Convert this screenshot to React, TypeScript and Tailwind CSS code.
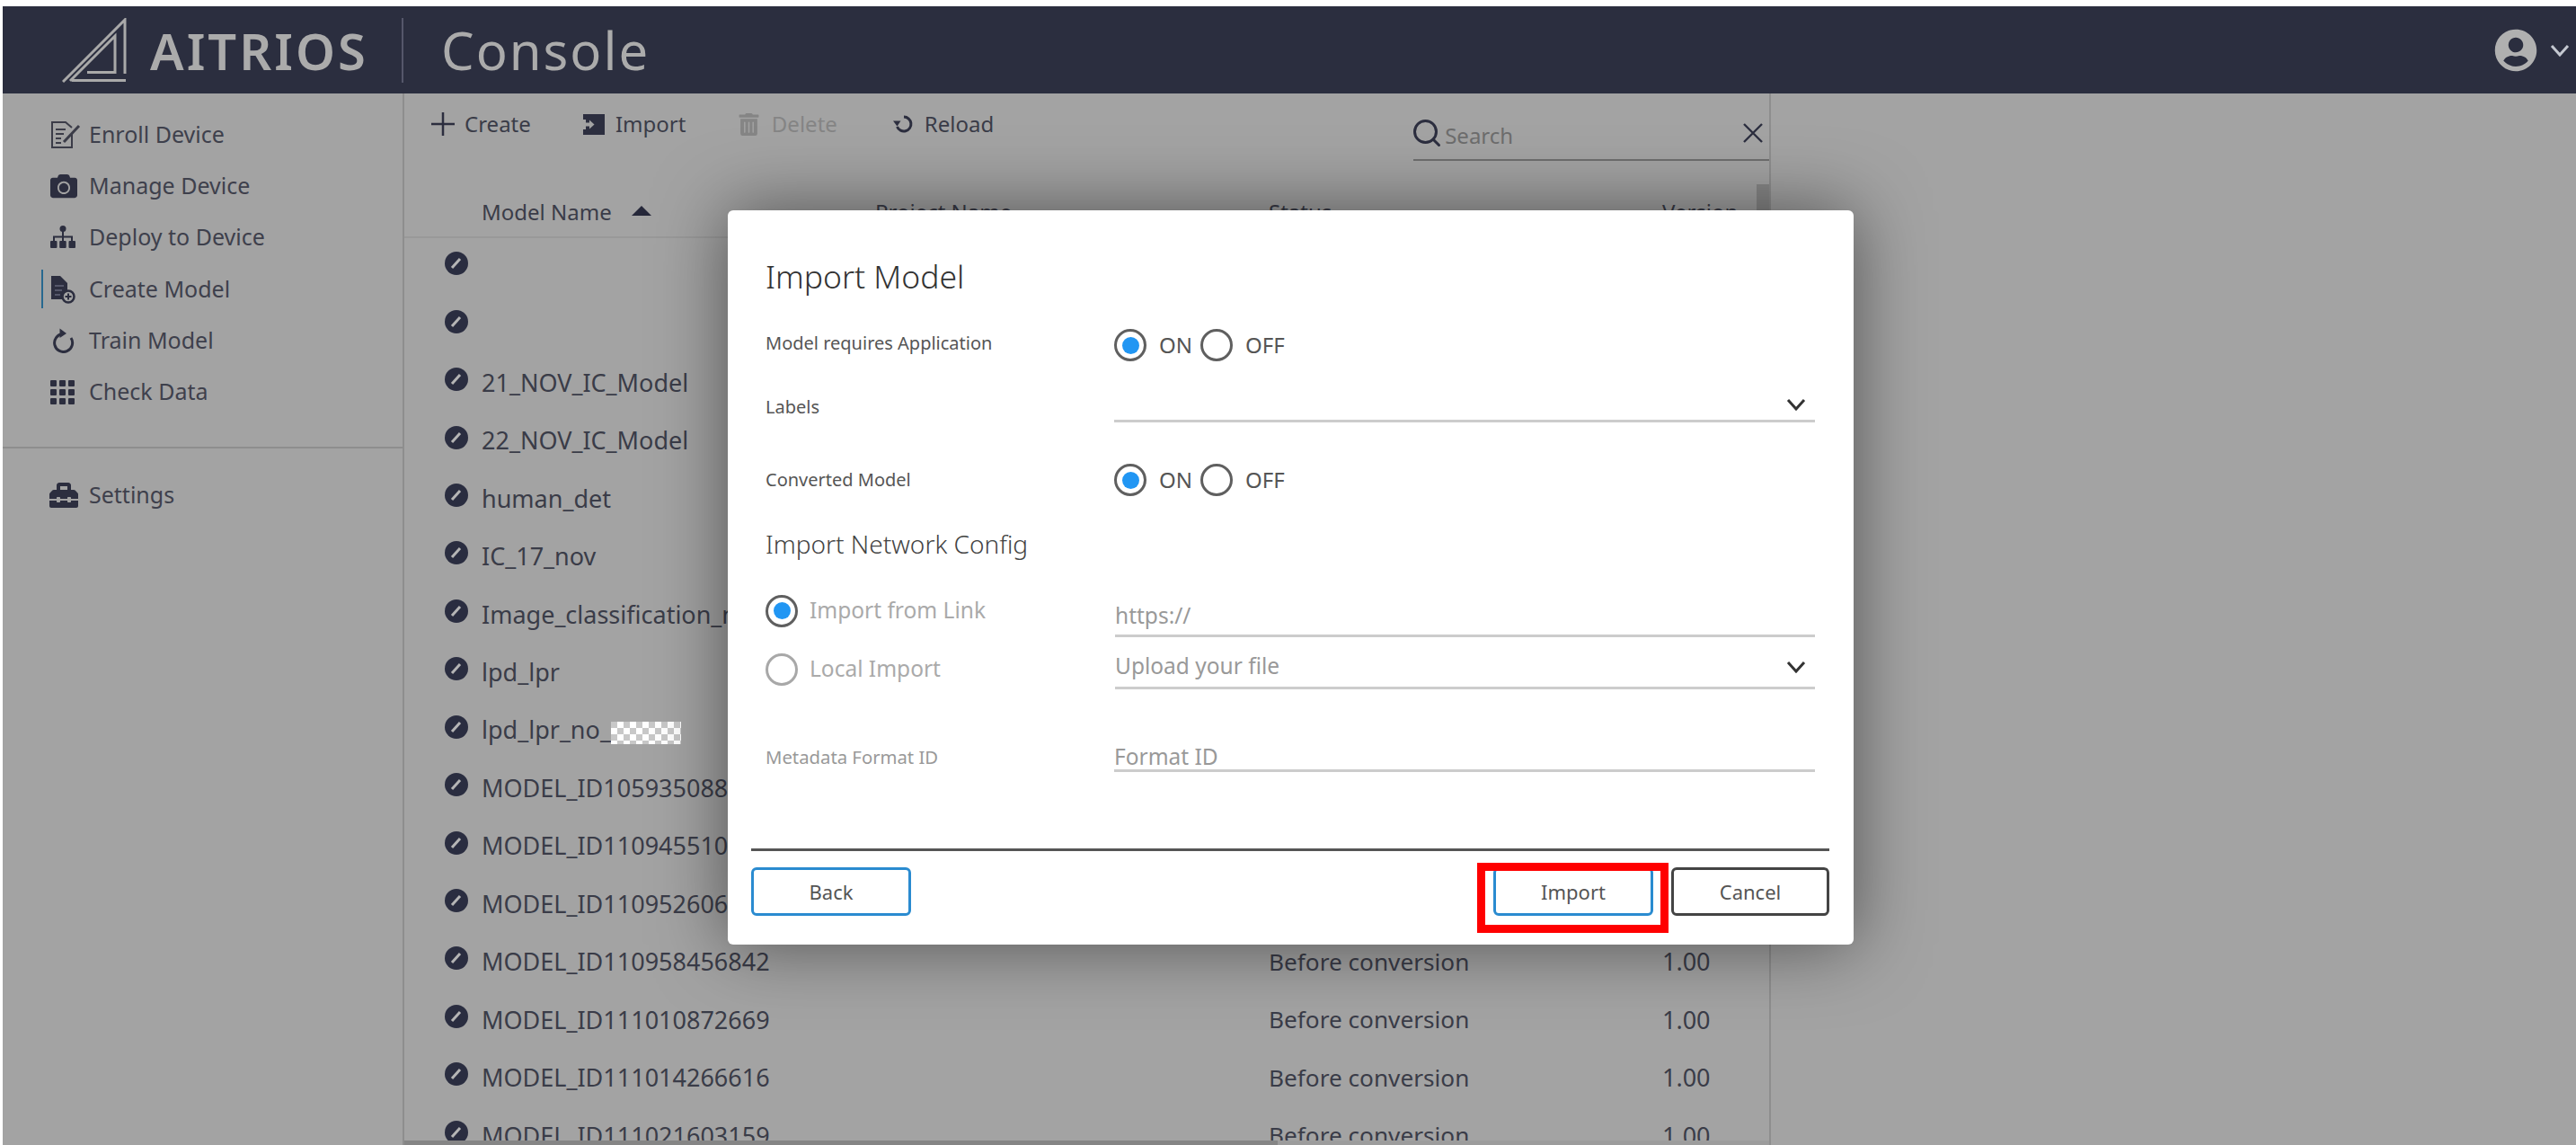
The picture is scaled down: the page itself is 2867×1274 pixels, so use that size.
import { Search } from "lucide-react";
import { FaCamera, FaToolbox, FaUserCircle, FaTrashAlt } from "react-icons/fa";

function Logo() {
  return (
    <svg width="72" height="72" viewBox="0 0 72 72" fill="none" stroke="#a9a9a9" strokeWidth="3" className="shrink-0">
      <path d="M1 71 L70 2 V62" />
      <path d="M11 69.5 H71" />
      <path d="M9 70 L59 20 V60.5 H28" />
    </svg>
  );
}

function Chev({ color = "#333" }: { color?: string }) {
  return (
    <svg width="22" height="14" viewBox="0 0 22 14" fill="none" stroke={color} strokeWidth="3" className="shrink-0">
      <path d="M2 2 L11 12 L20 2" />
    </svg>
  );
}

function EnrollIcon() {
  return (
    <svg width="34" height="32" viewBox="0 0 34 32" fill="none" stroke="#3b3c48" strokeWidth="2">
      <path d="M24 14 V30 H2 V2 H17 L24 8" />
      <path d="M6 10 H17 M6 15 H15 M6 20 H12 M6 25 H12" />
      <path d="M15 24 L32 6" strokeWidth="3" />
    </svg>
  );
}

function CameraIcon() {
  return <FaCamera size={30} color="#2c2e3f" />;
}

function SitemapIcon() {
  return (
    <svg width="28" height="26" viewBox="0 0 28 26" fill="#2c2e3f">
      <circle cx="14" cy="3.5" r="3.5" />
      <path d="M14 6 V17 M4 18 V12.5 H24 V18" fill="none" stroke="#2c2e3f" strokeWidth="2" />
      <rect x="0" y="17" width="7.5" height="8" rx="1" />
      <rect x="10.2" y="17" width="7.5" height="8" rx="1" />
      <rect x="20.5" y="17" width="7.5" height="8" rx="1" />
    </svg>
  );
}

function CreateIcon() {
  return (
    <svg width="28" height="32" viewBox="0 0 28 32">
      <path d="M1 1 H11 L19 9 V27 H1 Z" fill="#2c2e3f" />
      <path d="M5 12 H15 M5 17 H13 M5 22 H11" stroke="#55576a" strokeWidth="2" />
      <circle cx="20" cy="24" r="6.5" fill="#a3a3a3" stroke="#2c2e3f" strokeWidth="2.5" />
      <path d="M20 20.5 V27.5 M16.5 24 H23.5" stroke="#2c2e3f" strokeWidth="2" />
    </svg>
  );
}

function TrainIcon() {
  return (
    <svg width="28" height="28" viewBox="0 0 28 28" fill="none">
      <path d="M14 6.5 A10 10 0 1 0 23 11" stroke="#2c2e3f" strokeWidth="3" />
      <path d="M10.5 0.5 L18 6 L10.5 11 Z" fill="#2c2e3f" />
    </svg>
  );
}

function GridIcon() {
  const cells = [0, 10, 20];
  return (
    <svg width="27" height="27" viewBox="0 0 27 27" fill="#2c2e3f">
      {cells.map((y) => cells.map((x) => <rect key={`${x}-${y}`} x={x} y={y} width="7" height="7" rx="1" />))}
    </svg>
  );
}

function ImportIcon() {
  return (
    <svg width="24" height="23" viewBox="0 0 24 23" className="shrink-0">
      <path d="M0 0 H24 V23 H0 Z" fill="#2c2e3f" />
      <path d="M0 6 H3 V17 H0 Z" fill="#a3a3a3" />
      <path d="M3 9.5 H7 V6.5 L12.5 11.5 L7 16.5 V13.5 H3 Z" fill="#a3a3a3" />
    </svg>
  );
}

function ReloadIcon() {
  return (
    <svg width="24" height="24" viewBox="0 0 24 24" fill="none" className="shrink-0">
      <path d="M13 4 A8 8 0 1 1 5.5 15" stroke="#2c2e3f" strokeWidth="3" />
      <path d="M1 8.5 L9.5 8.5 L5.5 14.5 Z" fill="#2c2e3f" />
    </svg>
  );
}

function EditBadge() {
  return (
    <svg width="26" height="26" viewBox="0 0 26 26" className="shrink-0">
      <circle cx="13" cy="13" r="13" fill="#2a2d40" />
      <path d="M8 18 L17 8" stroke="#b5b5b5" strokeWidth="3" />
    </svg>
  );
}

function Radio({ on, dim }: { on?: boolean; dim?: boolean }) {
  return (
    <span
      className={`flex h-[36px] w-[36px] shrink-0 items-center justify-center rounded-full border-[3px] bg-white ${
        dim && !on ? "border-[#a8a8a8]" : "border-[#5f5f5f]"
      }`}
    >
      {on && <span className="h-[19px] w-[19px] rounded-full bg-[#2196f3]" />}
    </span>
  );
}

function OnOff() {
  return (
    <div className="flex items-center text-[24px] text-[#555]">
      <Radio on />
      <span className="ml-[14px] w-[46px]">ON</span>
      <Radio />
      <span className="ml-[14px]">OFF</span>
    </div>
  );
}

const nav = [
  { label: "Enroll Device", icon: <EnrollIcon /> },
  { label: "Manage Device", icon: <CameraIcon /> },
  { label: "Deploy to Device", icon: <SitemapIcon /> },
  { label: "Create Model", icon: <CreateIcon />, active: true },
  { label: "Train Model", icon: <TrainIcon /> },
  { label: "Check Data", icon: <GridIcon /> },
];

const rows = [
  "",
  "",
  "21_NOV_IC_Model",
  "22_NOV_IC_Model",
  "human_det",
  "IC_17_nov",
  "Image_classification_model",
  "lpd_lpr",
  "lpd_lpr_no_",
  "MODEL_ID105935088000",
  "MODEL_ID110945510000",
  "MODEL_ID110952606400",
  "MODEL_ID110958456842",
  "MODEL_ID111010872669",
  "MODEL_ID111014266616",
  "MODEL_ID111021603159",
];

function App() {
  return (
    <div
      className="relative h-[1274px] w-[2867px] overflow-hidden bg-white pl-[3px] pt-[7px]"
      style={{ fontFamily: '"Noto Sans", "Open Sans", sans-serif' }}
    >
      <div className="flex h-[1267px] flex-col overflow-hidden bg-[#a3a3a3]">
        {/* Header */}
        <header className="flex h-[97px] shrink-0 items-center bg-[#2b2e3f] pl-[66px] pr-[7px]">
          <Logo />
          <span className="ml-[26px] w-[280px] text-[56px] font-semibold leading-none tracking-[3px] text-[#ababab]">AITRIOS</span>
          <span className="h-[72px] w-[2px] bg-[#55576a]" />
          <span className="ml-[42px] text-[58px] leading-none tracking-[2px] text-[#ababab]">Console</span>
          <div className="ml-auto flex items-center gap-[14px]">
            <FaUserCircle size={48} color="#b0b0b0" />
            <Chev color="#c4c8d0" />
          </div>
        </header>

        <div className="flex min-h-0 flex-1">
          {/* Sidebar */}
          <aside className="w-[447px] shrink-0 border-r-[2px] border-[#8e8e8e] text-[25px] text-[#3e404c]">
            <nav className="flex h-[395px] flex-col border-b-[2px] border-[#8e8e8e] pt-[17px]">
              {nav.map((n) => (
                <div key={n.label} className="relative flex h-[57.3px] items-center pl-[53px]">
                  {n.active && <span className="absolute left-[43px] top-[7px] h-[43px] w-[2px] bg-[#27688f]" />}
                  <span className="flex w-[43px] justify-start">{n.icon}</span>
                  <span>{n.label}</span>
                </div>
              ))}
            </nav>
            <div className="flex items-center pl-[52px] pt-[33px]">
              <span className="flex w-[44px]">
                <FaToolbox size={32} color="#2c2e3f" />
              </span>
              <span>Settings</span>
            </div>
          </aside>

          {/* Main */}
          <main className="relative flex w-[1521px] shrink-0 flex-col border-r-[2px] border-[#8e8e8e] text-[#3a3c48]">
            <div className="flex h-[72px] items-start pt-[16px] text-[24px]">
              <span className="ml-[30px] flex w-[169px] items-center gap-[11px]">
                <svg width="26" height="26" viewBox="0 0 26 26" stroke="#2c2e3f" strokeWidth="2.5" className="shrink-0">
                  <path d="M13 0 V26 M0 13 H26" />
                </svg>
                Create
              </span>
              <span className="flex w-[172px] items-center gap-[12px]">
                <ImportIcon />
                Import
              </span>
              <span className="flex w-[172px] items-center gap-[13px] text-[#858585]">
                <FaTrashAlt size={25} color="#858585" />
                Delete
              </span>
              <span className="flex items-center gap-[12px]">
                <ReloadIcon />
                Reload
              </span>
              <div className="ml-[467px] mt-[5px] flex h-[54px] w-[396px] items-center border-b-[2px] border-[#6e6e6e] pb-[6px]">
                <Search size={36} color="#2c2e3f" strokeWidth={2} className="-ml-[3px] shrink-0" />
                <span className="ml-[2px] mt-[6px] text-[#6d6d6d]">Search</span>
                <svg width="24" height="22" viewBox="0 0 24 22" stroke="#2c2e3f" strokeWidth="2.4" className="ml-auto mr-[6px]">
                  <path d="M2 1 L22 21 M22 1 L2 21" />
                </svg>
              </div>
            </div>
            <div className="relative flex h-[89px] shrink-0 items-end border-b-[2px] border-[#999] pb-[9px] text-[24px]">
              <span className="ml-[86px] flex w-[438px] items-center gap-[22px]">
                Model Name
                <span className="mt-[-3px] h-0 w-0 border-x-[11px] border-b-[11px] border-x-transparent border-b-[#26283a]" />
              </span>
              <span className="w-[438px]">Project Name</span>
              <span className="w-[438px]">Status</span>
              <span>Version</span>
              <span className="absolute right-0 top-[29px] h-[80px] w-[14px] bg-[#888]" />
            </div>
            <div className="flex-1 overflow-hidden text-[27px]">
              {rows.map((name, i) => (
                <div key={i} className="flex h-[64.45px] items-center">
                  <span className="ml-[45px] flex w-[41px] items-start pb-[8px]">
                    <EditBadge />
                  </span>
                  <span className="w-[876px] whitespace-nowrap">
                    {name}
                    {name === "lpd_lpr_no_" && (
                      <span className="inline-block h-[25px] w-[78px] bg-[repeating-conic-gradient(#ffffff_0_25%,#c8c8c8_0_50%)] bg-[length:14px_14px] align-[-6px]" />
                    )}
                  </span>
                  <span className="w-[438px] text-[26.2px]">Before conversion</span>
                  <span>1.00</span>
                </div>
              ))}
            </div>
            {/* Horizontal scrollbar */}
            <div className="absolute bottom-0 left-0 right-0 h-[5px] bg-[#9c9c9c]">
              <div className="h-full w-[972px] bg-[#858585]" />
            </div>
          </main>
        </div>
      </div>

      {/* Modal */}
      <div className="absolute left-[810px] top-[234px] flex h-[817px] w-[1253px] flex-col rounded-[6px] bg-white pl-[42px] pr-[43px] pt-[50px] text-[#444] shadow-[0_0_80px_rgba(0,0,0,0.5)]">
        <h2 className="h-[46px] text-[35.5px] font-light leading-[46px] text-[#333]">Import Model</h2>

        <div className="mt-[22px] flex h-[64px] items-center">
          <span className="w-[388px] pb-[4px] text-[20px] text-[#555]">Model requires Application</span>
          <OnOff />
        </div>

        <div className="flex h-[54px] items-end">
          <span className="w-[388px] pb-[2px] text-[20px] text-[#555]">Labels</span>
          <div className="flex h-[40px] flex-1 items-center justify-end border-b-[3px] border-[#ccc] pr-[10px] pt-[2px]">
            <Chev />
          </div>
        </div>

        <div className="mt-[32px] flex h-[64px] items-center">
          <span className="w-[388px] text-[20px] text-[#555]">Converted Model</span>
          <OnOff />
        </div>

        <h3 className="mt-[19px] h-[40px] text-[28px] font-light leading-[40px] text-[#444]">Import Network Config</h3>

        <div className="mt-[25px] flex h-[59px] items-end">
          <div className="flex w-[389px] items-center gap-[13px] self-center text-[24.5px] text-[#aaa]">
            <Radio on dim />
            Import from Link
          </div>
          <div className="flex h-[48px] flex-1 items-center border-b-[3px] border-[#ccc] pt-[4px] text-[24.5px] text-[#999]">https://</div>
        </div>
        <div className="flex h-[58px] items-end">
          <div className="flex w-[389px] items-center gap-[13px] self-end pb-[4px] text-[24.5px] text-[#aaa]">
            <Radio dim />
            Local Import
          </div>
          <div className="flex h-[48px] flex-1 items-center justify-between border-b-[3px] border-[#ccc] pr-[10px] text-[24.5px] text-[#999]">
            Upload your file
            <Chev />
          </div>
        </div>

        <div className="mt-[52px] flex h-[40px] items-end">
          <span className="w-[388px] pb-[2px] text-[20.3px] text-[#999]">Metadata Format ID</span>
          <div className="flex h-[36px] flex-1 items-center border-b-[3px] border-[#ccc] pt-[5px] text-[24.5px] text-[#999]">Format ID</div>
        </div>

        <footer className="-mx-[16px] mt-auto flex justify-between border-t-[3px] border-[#555] pb-[32px] pt-[18px] text-[22px]">
          <button className="flex h-[54px] w-[178px] items-center justify-center rounded-[6px] border-[3px] border-[#2a8bd0] text-[#555]">Back</button>
          <div className="flex gap-[20px]">
            <div className="relative">
              <button className="flex h-[54px] w-[178px] items-center justify-center rounded-[6px] border-[3px] border-[#2a8bd0] text-[#555]">Import</button>
              <span className="absolute bottom-[-19px] left-[-18px] right-[-17px] top-[-5px] border-[9px] border-[#f00]" />
            </div>
            <button className="flex h-[54px] w-[176px] items-center justify-center rounded-[6px] border-[3px] border-[#444] text-[#555]">Cancel</button>
          </div>
        </footer>
      </div>
    </div>
  );
}

export default App;
